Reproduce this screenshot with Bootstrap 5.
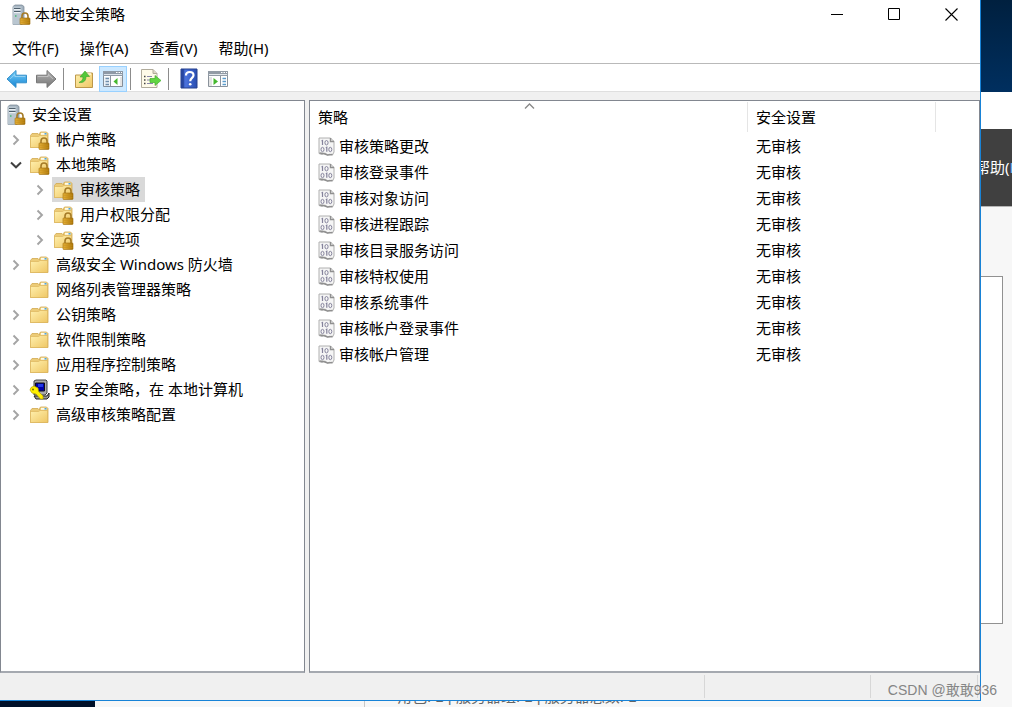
<!DOCTYPE html>
<html lang="zh-CN">
<head>
<meta charset="utf-8">
<meta name="viewport" content="width=device-width, initial-scale=1">
<title>本地安全策略</title>
<link href="https://cdn.jsdelivr.net/npm/bootstrap@5.3.0/dist/css/bootstrap.min.css" rel="stylesheet">
<style>
body{font-family:"Noto Sans","Noto Sans CJK SC",sans-serif;font-size:15px;line-height:25px;color:#000;background:#f7f7f7}
button{color:inherit;font:inherit;background:none;border:0;padding:0}
svg{display:block;flex:none}
.desktop{display:grid;grid-template-columns:minmax(0,1fr) 31px;grid-template-rows:minmax(0,1fr) 6px;height:100vh}
.app-window{border-right:1px solid #1883d7;border-bottom:1px solid #1883d7;background:#f0f0f0;min-height:0}
.title-bar{height:29px;padding-left:10px;background:#fff}
.title-bar h1{font-size:15px;line-height:25px;font-weight:400;padding-left:3px}
.caption-btn{width:57px;height:29px;display:grid;place-items:center}
.menu-bar{height:35px;padding:7px 0 0 12px;gap:21px;background:#fff;border-bottom:1px solid #b9b9b9}
.tool-bar{height:28px;padding:2px 0 0 3px;gap:1px;background:#fff;border-bottom:1px solid #dfdfdf}
.tool-btn{width:28px;height:26px;display:grid;place-items:center}
.tool-btn.pressed{background:#cce8ff;border:1px solid #99d1ff}
.tool-sep{width:1px;height:22px;margin:0 5px 0 2px;background:#8c8c8c}
.flip{transform:scaleX(-1)}
.panes{padding-top:8px;gap:4px;min-height:0}
.pane{background:#fff;border:1px solid #828790;border-bottom:2px solid #a5a9b0;min-height:0;overflow:hidden}
.tree-pane{flex:0 0 305px;padding:1px 0 0 2px}
.tree ul{padding-left:24px}
.tree-row{height:25px}
.twisty{width:25px;height:25px;display:grid;place-items:center}
.node{display:flex;align-items:center;gap:5px;height:25px;padding:0 5px 0 1px;white-space:nowrap}
.node.root{margin-left:1px}
.node.selected{background:#d9d9d9}
.policy-list{table-layout:fixed;width:100%;line-height:26px}
.policy-list th{font-weight:400;height:32px;padding:1px 8px;line-height:31px;position:relative}
.policy-list th span{display:block;height:30px;margin:0 -8px;padding-left:8px;border-right:1px solid #e5e5e5}
.policy-list td{height:26px;padding:0 8px}
.sort-mark{position:absolute;top:1px;left:0;right:0;margin:0 auto}
.status-bar{height:27px;padding:2px 0}
.status-bar div{border-right:1px solid #d7d7d7}
.status-bar .st-mid{width:166px}
.status-bar .st-end{width:107px;margin-right:2px}
.side-sky{height:92px;background:linear-gradient(#00203f,#002f5f)}
.side-white{height:37px;background:#fff}
.side-menu{height:78px;background:#404040;color:#fff;border-bottom:1px solid #b5b5b5;overflow:hidden;white-space:nowrap}
.side-menu a{margin-left:-6px}
.side-menu i{font-style:normal;color:#6cb8f0}
.side-card{margin:69px 9px 0 0;height:348px;background:#fff;border:solid #919191;border-width:1px 1px 1px 0}
.below{grid-column:1/-1;overflow:hidden}
.below-dark{flex:0 0 95px;background:#001028}
.below-blank{flex:0 0 270px;border-right:1px solid #c8c8c8}
.below p{font-family:"Liberation Sans","Noto Sans CJK SC",sans-serif;line-height:20px;margin:0 0 0 32px;color:#666;white-space:nowrap}
.watermark{position:absolute;right:15px;bottom:7px;font:14px/20px "Liberation Sans","Noto Sans CJK SC",sans-serif;color:#858585}
</style>
</head>
<body>
<svg width="0" height="0" class="position-absolute" aria-hidden="true">
<defs>
<linearGradient id="gFold" x2="1" y2="1"><stop stop-color="#fff0ae"/><stop offset="1" stop-color="#efc765"/></linearGradient>
<linearGradient id="gGold" x2="1"><stop stop-color="#e9b53e"/><stop offset="1" stop-color="#a8740a"/></linearGradient>
<linearGradient id="gBlue" x2="0" y2="1"><stop stop-color="#79d2fa"/><stop offset="1" stop-color="#1583d3"/></linearGradient>
<linearGradient id="gGray" x2="0" y2="1"><stop stop-color="#b5b5b5"/><stop offset="1" stop-color="#747474"/></linearGradient>
<linearGradient id="gHelp" x2="1"><stop stop-color="#2746a3"/><stop offset=".3" stop-color="#4b73dd"/><stop offset="1" stop-color="#284caf"/></linearGradient>
<symbol id="lock" viewBox="0 0 12 13"><path d="M3 7V4a3 3 0 0 1 6 0v3" fill="none" stroke="#a57b27" stroke-width="1.6"/><rect x="1" y="6" width="10" height="6.5" rx=".7" fill="url(#gGold)" stroke="#a06b08" stroke-width=".6"/><path d="M1.5 8.2h9M1.5 10.3h9" stroke="#c98f19" stroke-width=".7"/></symbol>
<symbol id="folder" viewBox="0 0 22 22"><path d="M1.5 6.5 3 4.5h6l1.500 1.500V4.500l1-1.500h6l1.500 1.500V18.500h-17.500z" fill="#eccb77" stroke="#d2aa50" stroke-width=".8"/><path d="M12 3.800h5.500v2H12z" fill="#fffbe9"/><path d="M15.500 4.800h2" stroke="#3a9adb" stroke-width="1.400"/><path d="M1.500 7.500h8l1.500-1h7.500v12H1.500z" fill="url(#gFold)" stroke="#dcb65e" stroke-width=".7"/></symbol>
<symbol id="lfolder" viewBox="0 0 22 22"><use href="#folder" width="22" height="22"/><use href="#lock" x="9" y="8" width="12" height="13"/></symbol>
<symbol id="server" viewBox="0 0 22 22"><path d="M3 2.500 5 1h7l2 1.500V18.500L12 20.500H3z" fill="#a3b2bf" stroke="#74838f" stroke-width=".7"/><path d="M3 2.500h8.500v18H3z" fill="#b9c6d0"/><path d="M4 4.500h6.500M4 7.500h6.500" stroke="#4f5f6c" stroke-width="1.200"/><path d="M4 5.700h6.500M4 8.700h6.500" stroke="#f5fafc"/><path d="M5 12h1.500" stroke="#44bb72" stroke-width="1.500"/><use href="#lock" x="9" y="8" width="12" height="13"/></symbol>
<symbol id="ipsec" viewBox="0 0 22 22"><path d="M5 2 7 1h10l1 1v12l-2 2H5z" fill="#aaa" stroke="#333" stroke-width=".9"/><path d="M6.500 4h9v8h-9z" fill="#0000a8" stroke="#111"/><path d="M9 5h5v3H9z" fill="#2038e8"/><path d="M5 17h13l2-3v4l-2 2H7z" fill="#999" stroke="#222"/><path d="M2 8.500 5 7l4 2 .5 3.500L14 17v3h-2.500L7 15l-4-1-2-3z" fill="#fff000" stroke="#b3a000" stroke-width=".7"/><circle cx="4" cy="10.500" r=".9" fill="#665c00"/></symbol>
<symbol id="closed" viewBox="0 0 12 12"><path d="m3.500 1.500 4.500 4.500-4.500 4.500" fill="none" stroke="#a4a4a4" stroke-width="1.900"/></symbol>
<symbol id="opened" viewBox="0 0 12 12"><path d="m1 3.500 5 4.800 5-4.800" fill="none" stroke="#404040" stroke-width="2"/></symbol>
<symbol id="policy" viewBox="0 0 17 19"><path d="M1 1h11.500l3.500 3.500v10.500l-1.500 3-3-.7-2 .7-2.500-2-3 1.500-3-1z" fill="#f5f5f5" stroke="#b0b0b0"/><path d="M12.500 1v3.500H16M1.500 16l4 .5 4 1.500 5-.5" fill="none" stroke="#8f8f8f" stroke-width="1.400"/><path d="M3.500 4 4.500 3.500v4.500" fill="none" stroke="#85839c" stroke-width="1.200"/><ellipse cx="8.500" cy="5.700" rx="1.600" ry="2.200" fill="none" stroke="#85839c"/><ellipse cx="4.500" cy="12.500" rx="1.500" ry="2.200" fill="none" stroke="#85839c"/><path d="m7.800 10.800 1-.5v4.500" fill="none" stroke="#85839c" stroke-width="1.200"/><ellipse cx="12.300" cy="12.500" rx="1.500" ry="2.200" fill="none" stroke="#85839c"/></symbol>
<symbol id="arrow" viewBox="0 0 22 20"><path d="M1 10 10 1.500V6.200h10.500v7.600H10v4.700z"/><path d="m4 10 4.800-4.500v2h10.500" fill="none" stroke="#fff" stroke-opacity=".35"/></symbol>
</defs>
</svg>
<div class="desktop position-relative">
<main class="app-window d-flex flex-column">
<header class="title-bar d-flex align-items-center">
<svg width="22" height="22"><use href="#server"/></svg>
<h1 class="mb-0 flex-grow-1">本地安全策略</h1>
<button class="caption-btn" aria-label="最小化"><svg width="13" height="13"><path d="M0 6.500h12" stroke="#000"/></svg></button>
<button class="caption-btn" aria-label="最大化"><svg width="13" height="13"><path d="M.5.5h11v11H.5z" fill="none" stroke="#000"/></svg></button>
<button class="caption-btn" aria-label="关闭"><svg width="13" height="13"><path d="m.5.5 12 12m0-12-12 12" stroke="#000" stroke-width="1.100"/></svg></button>
</header>
<nav class="menu-bar d-flex align-items-start"><button>文件(F)</button><button>操作(A)</button><button>查看(V)</button><button>帮助(H)</button></nav>
<div class="tool-bar d-flex align-items-center">
<button class="tool-btn" aria-label="后退"><svg width="22" height="20" fill="url(#gBlue)" stroke="#3490cb"><use href="#arrow"/></svg></button>
<button class="tool-btn" aria-label="前进"><svg class="flip" width="22" height="20" fill="url(#gGray)" stroke="#777"><use href="#arrow"/></svg></button>
<span class="tool-sep"></span>
<button class="tool-btn" aria-label="上一级"><svg width="20" height="20" viewBox="0 0 20 20"><path d="M1.500 6h7l1.500-2h8.500v14.500h-17z" fill="url(#gFold)" stroke="#bd984b"/><path d="M11 5h6" stroke="#fff9df" stroke-width="1.500"/><path d="M5 13.500c3-1.500 4-3 4-5.500H6l5-6 4.500 5.500H12c0 4-2 6.500-7 6z" fill="#54c83b" stroke="#3ba228" stroke-width=".6"/></svg></button>
<button class="tool-btn pressed" aria-label="显示控制台树"><svg width="22" height="18" viewBox="0 0 22 18"><path d="M1.500 1.500h19v15h-19z" fill="#fff" stroke="#838d99"/><path d="M1 1h20v5H1z" fill="#8e99a6"/><path d="M2 4.500h18" stroke="#dce3eb"/><path d="M14 2.500h1.500m1 0H18m1 0h1" stroke="#fff"/><path d="M2 7h6v9H2z" fill="#edf3f8"/><path d="M3.500 8.500H7m-3.500 3H7m-3.500 3H7" stroke="#6f8daa" stroke-width="1.300"/><path d="M8.500 6v10" stroke="#8b949e"/><path d="m15.500 8v7l-4-3.500z" fill="#45b82f"/><path d="M18 7h2v9h-2z" fill="#e4e4e4"/></svg></button>
<span class="tool-sep"></span>
<button class="tool-btn" aria-label="导出列表"><svg width="22" height="21" viewBox="0 0 22 21"><path d="M1.500 1.500H13l4 4v14H1.500z" fill="#fffbe9" stroke="#b0ab9b"/><path d="M13 1.500v4h4" fill="#ded8c6" stroke="#b0ab9b"/><path d="M4 8.500h1.500M4 12h1.500M4 15.500h1.500" stroke="#444" stroke-width="1.500"/><path d="M7 8.500h5M7 12h4M7 15.500h6" stroke="#8886aa"/><path d="M10 10.500h5V7.500l6 5-6 5v-3h-5z" fill="#61d642" stroke="#43ad2c" stroke-width=".7"/></svg></button>
<span class="tool-sep"></span>
<button class="tool-btn" aria-label="帮助"><svg width="18" height="21" viewBox="0 0 18 21"><path d="M1 1h16v19H1z" fill="url(#gHelp)" stroke="#26418d"/><path d="M3 1v19" stroke="#1d388c"/><path d="M6 7.500Q6 4 9.800 4t3.700 3.300c0 2.500-3.300 2.700-3.300 6" fill="none" stroke="#fff" stroke-width="2.200"/><circle cx="10.200" cy="16.300" r="1.300" fill="#fff"/></svg></button>
<button class="tool-btn" aria-label="显示操作窗格"><svg width="22" height="18" viewBox="0 0 22 18"><path d="M1.500 1.500h19v15h-19z" fill="#fff" stroke="#8a929b"/><path d="M1 1h20v5H1z" fill="#929ba5"/><path d="M2 4.500h18" stroke="#e4e8ec"/><path d="M14 2.500h1.500m1 0H18m1 0h1" stroke="#fff"/><path d="M2 7h3v9H2z" fill="#e4e4e4"/><path d="m6.500 8 4.500 3.500L6.500 15z" fill="#45b82f"/><path d="M13.500 6v10" stroke="#8b949e"/><path d="M15.500 8.500H19m-3.500 3H19m-3.500 3H19" stroke="#5b9bcb" stroke-width="1.400"/></svg></button>
</div>
<div class="panes d-flex flex-grow-1">
<nav class="pane tree-pane" aria-label="控制台树">
<div class="tree-row"><button class="node root"><svg width="22" height="22"><use href="#server"/></svg>安全设置</button></div>
<ul class="tree list-unstyled mb-0">
<li><div class="tree-row d-flex"><button class="twisty" aria-label="展开"><svg width="12" height="12"><use href="#closed"/></svg></button><button class="node"><svg width="22" height="22"><use href="#lfolder"/></svg>帐户策略</button></div></li>
<li><div class="tree-row d-flex"><button class="twisty" aria-label="折叠"><svg width="12" height="12"><use href="#opened"/></svg></button><button class="node"><svg width="22" height="22"><use href="#lfolder"/></svg>本地策略</button></div>
<ul class="list-unstyled">
<li><div class="tree-row d-flex"><button class="twisty" aria-label="展开"><svg width="12" height="12"><use href="#closed"/></svg></button><button class="node selected"><svg width="22" height="22"><use href="#lfolder"/></svg>审核策略</button></div></li>
<li><div class="tree-row d-flex"><button class="twisty" aria-label="展开"><svg width="12" height="12"><use href="#closed"/></svg></button><button class="node"><svg width="22" height="22"><use href="#lfolder"/></svg>用户权限分配</button></div></li>
<li><div class="tree-row d-flex"><button class="twisty" aria-label="展开"><svg width="12" height="12"><use href="#closed"/></svg></button><button class="node"><svg width="22" height="22"><use href="#lfolder"/></svg>安全选项</button></div></li>
</ul></li>
<li><div class="tree-row d-flex"><button class="twisty" aria-label="展开"><svg width="12" height="12"><use href="#closed"/></svg></button><button class="node"><svg width="22" height="22"><use href="#folder"/></svg>高级安全 Windows 防火墙</button></div></li>
<li><div class="tree-row d-flex"><span class="twisty"></span><button class="node"><svg width="22" height="22"><use href="#folder"/></svg>网络列表管理器策略</button></div></li>
<li><div class="tree-row d-flex"><button class="twisty" aria-label="展开"><svg width="12" height="12"><use href="#closed"/></svg></button><button class="node"><svg width="22" height="22"><use href="#folder"/></svg>公钥策略</button></div></li>
<li><div class="tree-row d-flex"><button class="twisty" aria-label="展开"><svg width="12" height="12"><use href="#closed"/></svg></button><button class="node"><svg width="22" height="22"><use href="#folder"/></svg>软件限制策略</button></div></li>
<li><div class="tree-row d-flex"><button class="twisty" aria-label="展开"><svg width="12" height="12"><use href="#closed"/></svg></button><button class="node"><svg width="22" height="22"><use href="#folder"/></svg>应用程序控制策略</button></div></li>
<li><div class="tree-row d-flex"><button class="twisty" aria-label="展开"><svg width="12" height="12"><use href="#closed"/></svg></button><button class="node"><svg width="22" height="22"><use href="#ipsec"/></svg>IP 安全策略，在 本地计算机</button></div></li>
<li><div class="tree-row d-flex"><button class="twisty" aria-label="展开"><svg width="12" height="12"><use href="#closed"/></svg></button><button class="node"><svg width="22" height="22"><use href="#folder"/></svg>高级审核策略配置</button></div></li>
</ul>
</nav>
<section class="pane flex-grow-1">
<table class="policy-list">
<colgroup><col style="width:438px"><col style="width:188px"><col></colgroup>
<thead><tr><th><span>策略</span><svg class="sort-mark" width="12" height="8"><path d="m2 6.500 4.500-4.500L11 6.500" fill="none" stroke="#888" stroke-width="1.300"/></svg></th><th><span>安全设置</span></th><th></th></tr></thead>
<tbody>
<tr><td><div class="d-flex align-items-center"><svg class="me-1" width="17" height="19"><use href="#policy"/></svg>审核策略更改</div></td><td>无审核</td><td></td></tr>
<tr><td><div class="d-flex align-items-center"><svg class="me-1" width="17" height="19"><use href="#policy"/></svg>审核登录事件</div></td><td>无审核</td><td></td></tr>
<tr><td><div class="d-flex align-items-center"><svg class="me-1" width="17" height="19"><use href="#policy"/></svg>审核对象访问</div></td><td>无审核</td><td></td></tr>
<tr><td><div class="d-flex align-items-center"><svg class="me-1" width="17" height="19"><use href="#policy"/></svg>审核进程跟踪</div></td><td>无审核</td><td></td></tr>
<tr><td><div class="d-flex align-items-center"><svg class="me-1" width="17" height="19"><use href="#policy"/></svg>审核目录服务访问</div></td><td>无审核</td><td></td></tr>
<tr><td><div class="d-flex align-items-center"><svg class="me-1" width="17" height="19"><use href="#policy"/></svg>审核特权使用</div></td><td>无审核</td><td></td></tr>
<tr><td><div class="d-flex align-items-center"><svg class="me-1" width="17" height="19"><use href="#policy"/></svg>审核系统事件</div></td><td>无审核</td><td></td></tr>
<tr><td><div class="d-flex align-items-center"><svg class="me-1" width="17" height="19"><use href="#policy"/></svg>审核帐户登录事件</div></td><td>无审核</td><td></td></tr>
<tr><td><div class="d-flex align-items-center"><svg class="me-1" width="17" height="19"><use href="#policy"/></svg>审核帐户管理</div></td><td>无审核</td><td></td></tr>
</tbody>
</table>
</section>
</div>
<footer class="status-bar d-flex"><div class="flex-grow-1"></div><div class="st-mid"></div><div class="st-end"></div></footer>
</main>
<aside class="overflow-hidden">
<div class="side-sky"></div>
<div class="side-white"></div>
<div class="side-menu d-flex align-items-center"><a href="#" class="text-white text-decoration-none">帮助(<i>H</i>)</a></div>
<div class="side-card"></div>
</aside>
<div class="below d-flex align-items-end">
<div class="below-dark align-self-stretch"></div><div class="below-blank align-self-stretch"></div>
<p>角色: 1 | 服务器组: 1 | 服务器总数: 1</p>
</div>
<div class="watermark">CSDN @敢敢936</div>
</div>
<script src="https://cdn.jsdelivr.net/npm/bootstrap@5.3.0/dist/js/bootstrap.bundle.min.js"></script>
</body>
</html>
